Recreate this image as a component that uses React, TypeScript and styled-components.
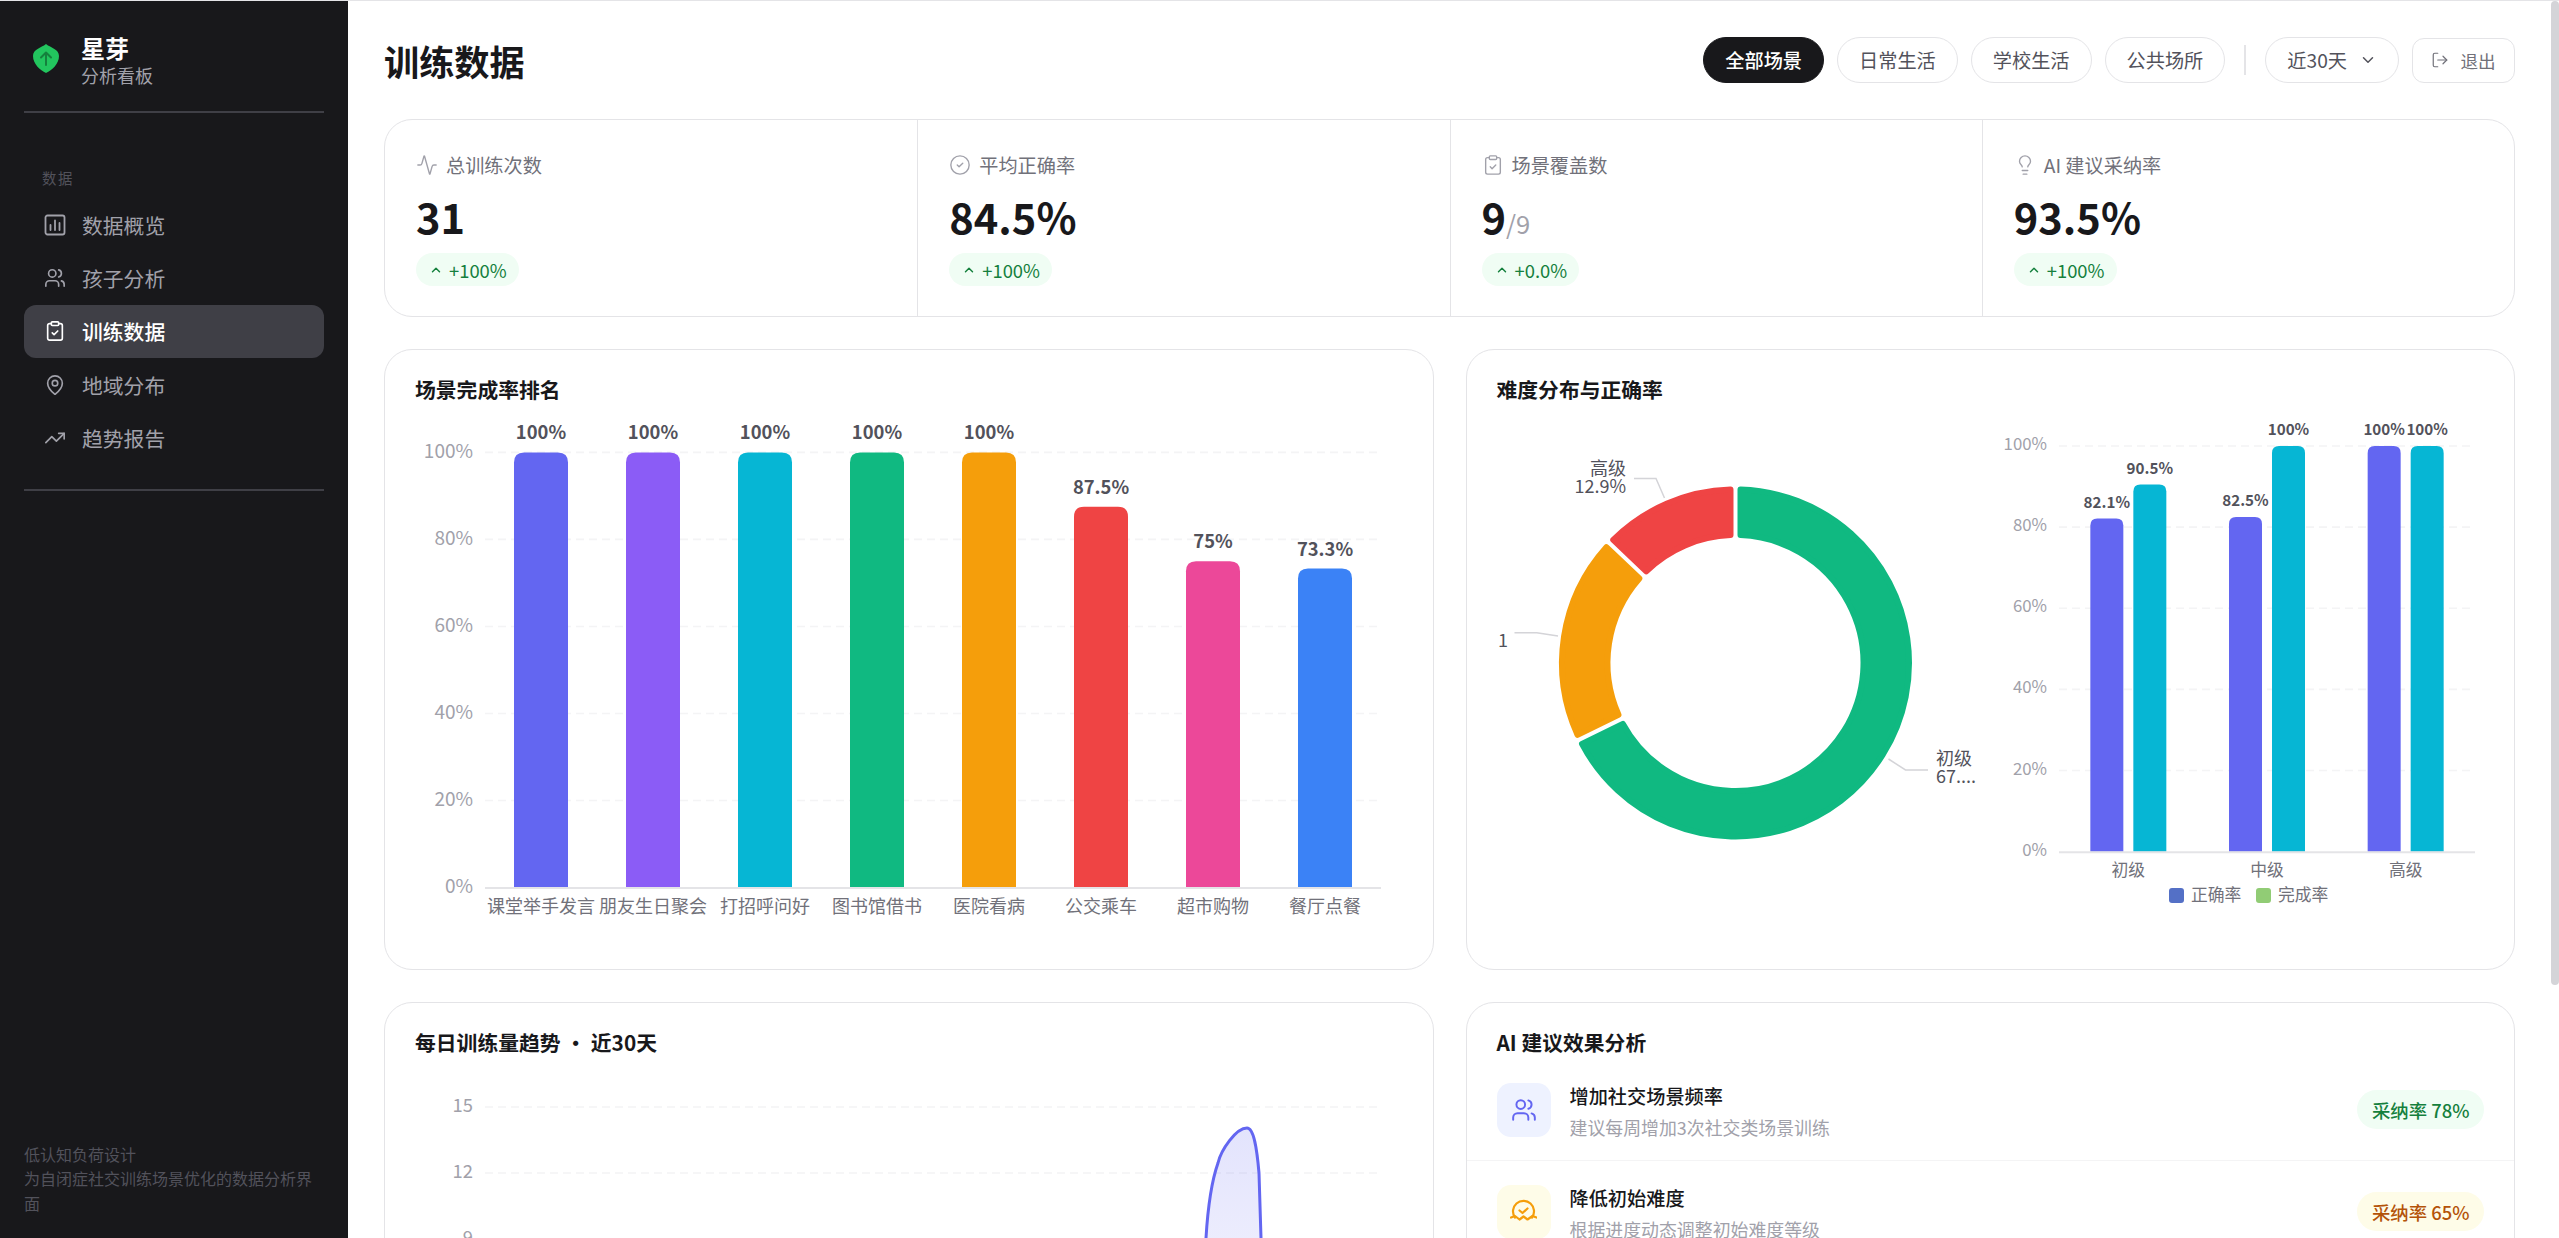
import React from "react";
import styled, { createGlobalStyle } from "styled-components";
import {
  Activity,
  ChevronDown,
  ChevronUp,
  CircleCheck,
  ClipboardCheck,
  Lightbulb,
  LogOut,
  MapPin,
  TrendingUp,
  Users,
} from "lucide-react";

const FONT = `"Noto Sans CJK SC", "Noto Sans", sans-serif`;

const GlobalStyle = createGlobalStyle`
  * { box-sizing: border-box; }
  html, body { margin: 0; height: 100%; overflow: hidden; background: #fff; }
  body { font-family: ${FONT}; color: #18181b; }
`;

const Layout = styled.div`
  display: flex;
  height: 100vh;
  border-top: 1px solid #e4e4e7;
`;

/* sidebar */
const Sidebar = styled.aside`
  width: 348px;
  flex-shrink: 0;
  background: #18181b;
  display: flex;
  flex-direction: column;
  padding: 0 24px;
`;

const Brand = styled.div`
  display: flex;
  align-items: center;
  gap: 21px;
  height: 112px;
  padding: 0 8px;
  border-bottom: 2px solid #3f3f46;
  margin-bottom: 54px;
  svg { margin-top: 4px; }
`;

const BrandText = styled.div`
  display: flex;
  flex-direction: column;
  margin-top: 10px;
`;

const BrandName = styled.span`
  font-size: 24px;
  line-height: 29px;
  font-weight: 700;
  color: #fff;
`;

const BrandSub = styled.span`
  font-size: 18px;
  line-height: 27px;
  color: #a1a1aa;
`;

const NavLabel = styled.div`
  font-size: 14.4px;
  line-height: 22px;
  letter-spacing: 1.6px;
  color: #52525b;
  padding-left: 18px;
  margin-bottom: 9px;
`;

const NavList = styled.nav`
  display: flex;
  flex-direction: column;
  padding-bottom: 25px;
  border-bottom: 2px solid #3f3f46;
`;

const NavItem = styled.a<{ $active?: boolean }>`
  display: flex;
  align-items: center;
  gap: 16px;
  height: 53.3px;
  padding: 0 20px;
  border-radius: 12px;
  font-size: 20.8px;
  font-weight: ${(p) => (p.$active ? 500 : 400)};
  color: ${(p) => (p.$active ? "#fff" : "#a1a1aa")};
  background: ${(p) => (p.$active ? "#3f3f46" : "transparent")};
`;

const SideFoot = styled.div`
  margin-top: auto;
  margin-bottom: 23px;
  font-size: 16px;
  line-height: 24.5px;
  color: #52525b;
`;

/* main */
const MainArea = styled.div`
  position: relative;
  flex: 1;
  min-width: 0;
`;

const Main = styled.main`
  height: 100%;
  overflow-y: auto;
  scrollbar-width: none;
  padding: 36px 44px 36px 36px;
`;

const ScrollThumb = styled.div`
  position: absolute;
  top: 0;
  right: 0;
  width: 8px;
  height: 984px;
  border-radius: 4px;
  background: #d4d4d8;
`;

const Header = styled.header`
  display: flex;
  align-items: center;
  height: 46px;
  gap: 13px;
  margin-bottom: 36px;
`;

const PageTitle = styled.h1`
  margin: 2px auto 0 0;
  font-size: 35.2px;
  font-weight: 700;
  line-height: 46px;
`;

const Pill = styled.button<{ $active?: boolean }>`
  height: 46px;
  padding: 0 21px;
  display: inline-flex;
  align-items: center;
  gap: 12px;
  font-family: inherit;
  font-size: 19.2px;
  font-weight: ${(p) => (p.$active ? 500 : 400)};
  color: ${(p) => (p.$active ? "#fff" : "#52525b")};
  background: ${(p) => (p.$active ? "#18181b" : "#fff")};
  border: 1px solid ${(p) => (p.$active ? "#18181b" : "#e4e4e7")};
  border-radius: 23px;
`;

const Separator = styled.span`
  width: 2px;
  height: 30px;
  background: #e4e4e7;
  margin: 0 6px;
`;

const LogoutButton = styled.button`
  height: 45px;
  width: 103px;
  display: inline-flex;
  align-items: center;
  justify-content: center;
  gap: 11px;
  font-family: inherit;
  font-size: 17.6px;
  color: #71717a;
  background: #fff;
  border: 1px solid #e4e4e7;
  border-radius: 12px;
`;

const StatsCard = styled.section`
  display: grid;
  grid-template-columns: repeat(4, 1fr);
  border: 1px solid #e4e4e7;
  border-radius: 28px;
  margin-bottom: 32px;
`;

const StatCell = styled.div`
  display: flex;
  flex-direction: column;
  align-items: flex-start;
  padding: 31px 31px 30px;
  border-left: 1px solid #e4e4e7;
  &:first-child { border-left: 0; }
`;

const StatLabel = styled.div`
  display: flex;
  align-items: center;
  gap: 8px;
  height: 28px;
  font-size: 19.2px;
  color: #71717a;
  margin-bottom: 9px;
  svg { color: #a1a1aa; }
`;

const StatValue = styled.div`
  font-size: 41.6px;
  font-weight: 700;
  line-height: 56px;
  height: 56px;
  margin-bottom: 9px;
`;

const StatUnit = styled.span`
  font-size: 25.6px;
  font-weight: 400;
  line-height: 1;
  color: #a1a1aa;
`;

const DeltaBadge = styled.span`
  display: inline-flex;
  align-items: center;
  gap: 6px;
  height: 33px;
  padding: 0 12px 0 13px;
  border-radius: 17px;
  font-size: 18.4px;
  background: #f0fdf4;
  color: #15803d;
`;

const ChartRow = styled.div`
  display: grid;
  grid-template-columns: 1fr 1fr;
  gap: 32px;
  margin-bottom: 32px;
  &:last-child { margin-bottom: 0; }
`;

const Card = styled.section<{ $height: number }>`
  height: ${(p) => p.$height}px;
  border: 1px solid #e4e4e7;
  border-radius: 28px;
  overflow: hidden;
  display: flex;
  flex-direction: column;
`;

const CardTitle = styled.h2<{ $below?: number }>`
  margin: 0;
  padding: 24px 30px ${(p) => p.$below ?? 11}px;
  font-size: 20.8px;
  line-height: 30px;
  font-weight: 700;
`;

const ChartBody = styled.div`
  display: flex;
  justify-content: space-between;
  padding: 0 30px;
`;

const Svg = styled.svg`
  display: block;
  flex-shrink: 0;
  font-family: ${FONT};
`;

const AxisText = styled.text<{ $size: number }>`
  font-size: ${(p) => p.$size}px;
  fill: #a1a1aa;
`;

const CategoryText = styled.text<{ $size: number }>`
  font-size: ${(p) => p.$size}px;
  fill: #71717a;
`;

const ValueText = styled.text<{ $size: number }>`
  font-size: ${(p) => p.$size}px;
  font-weight: 700;
  fill: #52525b;
`;

const PieText = styled.text`
  font-size: 18px;
  fill: #52525b;
`;

const AdviceRow = styled.div`
  display: flex;
  align-items: center;
  gap: 19px;
  padding: 24px 30px;
  height: 102px;
  border-bottom: 1px solid #f4f4f5;
`;

const AdviceIcon = styled.div<{ $bg: string; $fg: string }>`
  width: 54px;
  height: 54px;
  flex-shrink: 0;
  border-radius: 14px;
  display: flex;
  align-items: center;
  justify-content: center;
  background: ${(p) => p.$bg};
  color: ${(p) => p.$fg};
`;

const AdviceText = styled.div`
  flex: 1;
  min-width: 0;
  padding-top: 3px;
`;

const AdviceTitle = styled.div`
  font-size: 19.2px;
  line-height: 28px;
  font-weight: 500;
`;

const AdviceSub = styled.div`
  font-size: 17.9px;
  line-height: 26px;
  margin-top: 4px;
  color: #a1a1aa;
`;

const RateBadge = styled.span<{ $bg: string; $fg: string }>`
  height: 39px;
  padding: 0 14.5px;
  display: inline-flex;
  align-items: center;
  border-radius: 20px;
  font-size: 18.4px;
  font-weight: 500;
  background: ${(p) => p.$bg};
  color: ${(p) => p.$fg};
`;

/* drawn icons */
const LeafLogo = () => (
  <svg width="28" height="31" viewBox="0 0 28 31">
    <path d="M14 1C19 5 27 6 27 13c0 8-7 14-13 17C8 27 1 21 1 13 1 6 9 5 14 1z" fill="#22c55e" />
    <path d="M14 22V10M9 14.5 14 9.5l5 5" fill="none" stroke="#15803d" strokeWidth="2" strokeLinecap="round" strokeLinejoin="round" />
  </svg>
);

const BoardIcon = () => (
  <svg width="22" height="22" viewBox="0 0 22 22" fill="none" stroke="currentColor" strokeWidth="1.8" strokeLinecap="round">
    <rect x="1.5" y="1.5" width="19" height="19" rx="2" />
    <path d="M6.5 16v-5M11 16V6.5M15.5 16v-7" />
  </svg>
);

const WaveCheckIcon = () => (
  <svg width="27" height="27" viewBox="0 0 27 27" fill="none" stroke="currentColor" strokeWidth="2.2" strokeLinecap="round" strokeLinejoin="round">
    <path d="M5 19.5A10.5 10.5 0 1 1 22 19.5" />
    <path d="M9.5 12.5l3 2.5 5-4.5" />
    <path d="M1 19.5l4-1.5 4.5 3.5 4-3 4 3 5-3.5 4 1.5" />
  </svg>
);

type Bar = { value: number; label: string; color: string };

type BarGroup = { name: string; bars: Bar[] };

const topRoundedBar = (x: number, y: number, w: number, h: number, r: number) =>
  `M${x} ${y + h}V${y + r}Q${x} ${y} ${x + r} ${y}H${x + w - r}Q${x + w} ${y} ${x + w} ${y + r}V${y + h}Z`;

type BarChartProps = {
  width: number;
  height: number;
  left: number;
  right: number;
  top: number;
  bottom: number;
  barWidth: number;
  barGap: number;
  radius: number;
  axisSize: number;
  categorySize: number;
  valueSize: number;
  valueLift: number;
  groups: BarGroup[];
  children?: React.ReactNode;
};

const BarChart = ({ width, height, left, right, top, bottom, barWidth, barGap, radius, axisSize, categorySize, valueSize, valueLift, groups, children }: BarChartProps) => {
  const step = (right - left) / groups.length;
  const plot = bottom - top;
  return (
    <Svg width={width} height={height}>
      {[100, 80, 60, 40, 20, 0].map((tick) => {
        const y = bottom - (plot * tick) / 100;
        return (
          <g key={tick}>
            {tick > 0 && <line x1={left} x2={right} y1={y} y2={y} stroke="#f4f4f5" strokeWidth="1.6" strokeDasharray="8 5" />}
            <AxisText $size={axisSize} x={left - 12} y={y - 3} textAnchor="end" dominantBaseline="central">
              {tick}%
            </AxisText>
          </g>
        );
      })}
      {groups.map((group, i) => {
        const cx = left + step * (i + 0.5);
        const total = group.bars.length * barWidth + (group.bars.length - 1) * barGap;
        return (
          <g key={group.name}>
            {group.bars.map((bar, j) => {
              const h = (plot * bar.value) / 100;
              const x = cx - total / 2 + j * (barWidth + barGap);
              return (
                <g key={j}>
                  <path d={topRoundedBar(x, bottom - h, barWidth, h, radius)} fill={bar.color} />
                  <ValueText $size={valueSize} x={x + barWidth / 2} y={bottom - h - valueLift} textAnchor="middle" dominantBaseline="central">
                    {bar.label}
                  </ValueText>
                </g>
              );
            })}
            <CategoryText $size={categorySize} x={cx} y={bottom + 17.5} textAnchor="middle" dominantBaseline="central">
              {group.name}
            </CategoryText>
          </g>
        );
      })}
      <line x1={left} x2={right} y1={bottom + 0.5} y2={bottom + 0.5} stroke="#e4e4e7" strokeWidth="2" />
      {children}
    </Svg>
  );
};

const polar = (cx: number, cy: number, r: number, a: number) => {
  const rad = (a * Math.PI) / 180;
  return `${(cx + r * Math.sin(rad)).toFixed(2)} ${(cy - r * Math.cos(rad)).toFixed(2)}`;
};

// ring slice with rounded corners: inset path, then stroked in its own colour
const slice = (cx: number, cy: number, R: number, r: number, a0: number, a1: number) => {
  const e = 5;
  const io = (Math.asin(e / R) * 180) / Math.PI;
  const ii = (Math.asin(e / r) * 180) / Math.PI;
  const large = a1 - a0 > 180 ? 1 : 0;
  return `M${polar(cx, cy, R, a0 + io)}A${R} ${R} 0 ${large} 1 ${polar(cx, cy, R, a1 - io)}L${polar(cx, cy, r, a1 - ii)}A${r} ${r} 0 ${large} 0 ${polar(cx, cy, r, a0 + ii)}Z`;
};

const Donut = () => {
  const cx = 238.5;
  const cy = 248;
  const parts = [
    { from: 0, to: (21 / 31) * 360, color: "#10b981" },
    { from: (21 / 31) * 360, to: (27 / 31) * 360, color: "#f59e0b" },
    { from: (27 / 31) * 360, to: 360, color: "#ef4444" },
  ];
  return (
    <Svg width="504" height="530">
      {parts.map((p) => (
        <path key={p.color} d={slice(cx, cy, 173.5, 128, p.from, p.to)} fill={p.color} stroke={p.color} strokeWidth="6" strokeLinejoin="round" />
      ))}
      <polyline points="137,63.5 159,63.5 167.5,83" fill="none" stroke="#d4d4d8" strokeWidth="1.5" />
      <polyline points="17.5,217.7 39.7,217.7 61,221" fill="none" stroke="#d4d4d8" strokeWidth="1.5" />
      <polyline points="391.5,344 408.5,355 431,355" fill="none" stroke="#d4d4d8" strokeWidth="1.5" />
      <PieText x="129" y="52" textAnchor="end" dominantBaseline="central">高级</PieText>
      <PieText x="129" y="70" textAnchor="end" dominantBaseline="central">12.9%</PieText>
      <PieText x="1" y="223.5" dominantBaseline="central">1</PieText>
      <PieText x="439" y="342" dominantBaseline="central">初级</PieText>
      <PieText x="439" y="359.5" dominantBaseline="central">67....</PieText>
    </Svg>
  );
};

const TrendChart = () => {
  const left = 70;
  const right = 966;
  const y = (v: number) => 39 + (15 - v) * 22;
  const curve = [
    "M721 369",
    "C771 369 781 232 791 170",
    "C793 137 797 112 803 95",
    "C806 82 821 60 832 60",
    "C839 60 842 82 844 105",
    "C845 132 845.5 152 846 170",
    "C849 252 861 369 901 369",
  ].join("");
  return (
    <Svg width="988" height="410">
      <defs>
        <linearGradient id="trendFill" x1="0" y1="0" x2="0" y2="1">
          <stop offset="0" stopColor="#6366f1" stopOpacity="0.18" />
          <stop offset="1" stopColor="#6366f1" stopOpacity="0.02" />
        </linearGradient>
      </defs>
      {[15, 12, 9, 6, 3, 0].map((tick) => (
        <g key={tick}>
          <line x1={left} x2={right} y1={y(tick)} y2={y(tick)} stroke={tick ? "#f4f4f5" : "#e4e4e7"} strokeWidth="1.6" strokeDasharray={tick ? "8 5" : undefined} />
          <AxisText $size={18.4} x={left - 12} y={y(tick) - 3} textAnchor="end" dominantBaseline="central">
            {tick}
          </AxisText>
        </g>
      ))}
      <path d={`${curve}Z`} fill="url(#trendFill)" />
      <path d={curve} fill="none" stroke="#6366f1" strokeWidth="3" />
    </Svg>
  );
};

const stats = [
  { icon: <Activity size={22} strokeWidth={1.5} />, label: "总训练次数", value: "31", delta: "+100%" },
  { icon: <CircleCheck size={22} strokeWidth={1.5} />, label: "平均正确率", value: "84.5%", delta: "+100%" },
  { icon: <ClipboardCheck size={22} strokeWidth={1.5} />, label: "场景覆盖数", value: "9", unit: "/9", delta: "+0.0%" },
  { icon: <Lightbulb size={22} strokeWidth={1.5} />, label: "AI 建议采纳率", value: "93.5%", delta: "+100%" },
];

const nav = [
  { icon: <BoardIcon />, label: "数据概览" },
  { icon: <Users size={22} strokeWidth={1.8} />, label: "孩子分析" },
  { icon: <ClipboardCheck size={22} strokeWidth={1.8} />, label: "训练数据", active: true },
  { icon: <MapPin size={22} strokeWidth={1.8} />, label: "地域分布" },
  { icon: <TrendingUp size={22} strokeWidth={1.8} />, label: "趋势报告" },
];

const completion: [string, number, string, string][] = [
  ["课堂举手发言", 100, "100%", "#6366f1"],
  ["朋友生日聚会", 100, "100%", "#8b5cf6"],
  ["打招呼问好", 100, "100%", "#06b6d4"],
  ["图书馆借书", 100, "100%", "#10b981"],
  ["医院看病", 100, "100%", "#f59e0b"],
  ["公交乘车", 87.5, "87.5%", "#ef4444"],
  ["超市购物", 75, "75%", "#ec4899"],
  ["餐厅点餐", 73.3, "73.3%", "#3b82f6"],
];

const completionGroups: BarGroup[] = completion.map(([name, value, label, color]) => ({
  name,
  bars: [{ value, label, color }],
}));

const difficultyGroups: BarGroup[] = [
  { name: "初级", bars: [{ value: 82.1, label: "82.1%", color: "#6366f1" }, { value: 90.5, label: "90.5%", color: "#06b6d4" }] },
  { name: "中级", bars: [{ value: 82.5, label: "82.5%", color: "#6366f1" }, { value: 100, label: "100%", color: "#06b6d4" }] },
  { name: "高级", bars: [{ value: 100, label: "100%", color: "#6366f1" }, { value: 100, label: "100%", color: "#06b6d4" }] },
];

export default function App() {
  return (
    <>
      <GlobalStyle />
      <Layout>
        <Sidebar>
          <Brand>
            <LeafLogo />
            <BrandText>
              <BrandName>星芽</BrandName>
              <BrandSub>分析看板</BrandSub>
            </BrandText>
          </Brand>
          <NavLabel>数据</NavLabel>
          <NavList>
            {nav.map((item) => (
              <NavItem key={item.label} $active={item.active}>
                {item.icon}
                {item.label}
              </NavItem>
            ))}
          </NavList>
          <SideFoot>
            低认知负荷设计
            <br />
            为自闭症社交训练场景优化的数据分析界面
          </SideFoot>
        </Sidebar>
        <MainArea>
          <Main>
            <Header>
              <PageTitle>训练数据</PageTitle>
              <Pill $active>全部场景</Pill>
              <Pill>日常生活</Pill>
              <Pill>学校生活</Pill>
              <Pill>公共场所</Pill>
              <Separator />
              <Pill>
                近30天
                <ChevronDown size={18} strokeWidth={2} />
              </Pill>
              <LogoutButton>
                <LogOut size={18} strokeWidth={1.6} />
                退出
              </LogoutButton>
            </Header>
            <StatsCard>
              {stats.map((s) => (
                <StatCell key={s.label}>
                  <StatLabel>
                    {s.icon}
                    {s.label}
                  </StatLabel>
                  <StatValue>
                    {s.value}
                    {s.unit && <StatUnit>{s.unit}</StatUnit>}
                  </StatValue>
                  <DeltaBadge>
                    <ChevronUp size={14} strokeWidth={2.5} />
                    {s.delta}
                  </DeltaBadge>
                </StatCell>
              ))}
            </StatsCard>
            <ChartRow>
              <Card $height={621}>
                <CardTitle>场景完成率排名</CardTitle>
                <ChartBody>
                  <BarChart
                    width={988}
                    height={530}
                    left={70}
                    right={966}
                    top={37.4}
                    bottom={472.5}
                    barWidth={54}
                    barGap={0}
                    radius={10}
                    axisSize={19}
                    categorySize={18}
                    valueSize={18.4}
                    valueLift={21}
                    groups={completionGroups}
                  />
                </ChartBody>
              </Card>
              <Card $height={621}>
                <CardTitle>难度分布与正确率</CardTitle>
                <ChartBody>
                  <Donut />
                  <BarChart
                    width={484}
                    height={530}
                    left={58}
                    right={474}
                    top={31}
                    bottom={436.7}
                    barWidth={33}
                    barGap={10}
                    radius={7}
                    axisSize={16.8}
                    categorySize={16.8}
                    valueSize={15.2}
                    valueLift={18}
                    groups={difficultyGroups}
                  >
                    <rect x="168" y="473" width="15" height="15" rx="3" fill="#5470c6" />
                    <CategoryText $size={16.8} x="190" y="479" dominantBaseline="central">正确率</CategoryText>
                    <rect x="255" y="473" width="15" height="15" rx="3" fill="#91cc75" />
                    <CategoryText $size={16.8} x="277" y="479" dominantBaseline="central">完成率</CategoryText>
                  </BarChart>
                </ChartBody>
              </Card>
            </ChartRow>
            <ChartRow>
              <Card $height={518}>
                <CardTitle $below={11}>每日训练量趋势 · 近30天</CardTitle>
                <ChartBody>
                  <TrendChart />
                </ChartBody>
              </Card>
              <Card $height={518}>
                <CardTitle $below={2}>AI 建议效果分析</CardTitle>
                <AdviceRow>
                  <AdviceIcon $bg="#eef2ff" $fg="#6366f1">
                    <Users size={26} strokeWidth={1.8} />
                  </AdviceIcon>
                  <AdviceText>
                    <AdviceTitle>增加社交场景频率</AdviceTitle>
                    <AdviceSub>建议每周增加3次社交类场景训练</AdviceSub>
                  </AdviceText>
                  <RateBadge $bg="#f0fdf4" $fg="#15803d">采纳率 78%</RateBadge>
                </AdviceRow>
                <AdviceRow>
                  <AdviceIcon $bg="#fefce8" $fg="#f59e0b">
                    <WaveCheckIcon />
                  </AdviceIcon>
                  <AdviceText>
                    <AdviceTitle>降低初始难度</AdviceTitle>
                    <AdviceSub>根据进度动态调整初始难度等级</AdviceSub>
                  </AdviceText>
                  <RateBadge $bg="#fefce8" $fg="#b45309">采纳率 65%</RateBadge>
                </AdviceRow>
              </Card>
            </ChartRow>
          </Main>
          <ScrollThumb />
        </MainArea>
      </Layout>
    </>
  );
}
